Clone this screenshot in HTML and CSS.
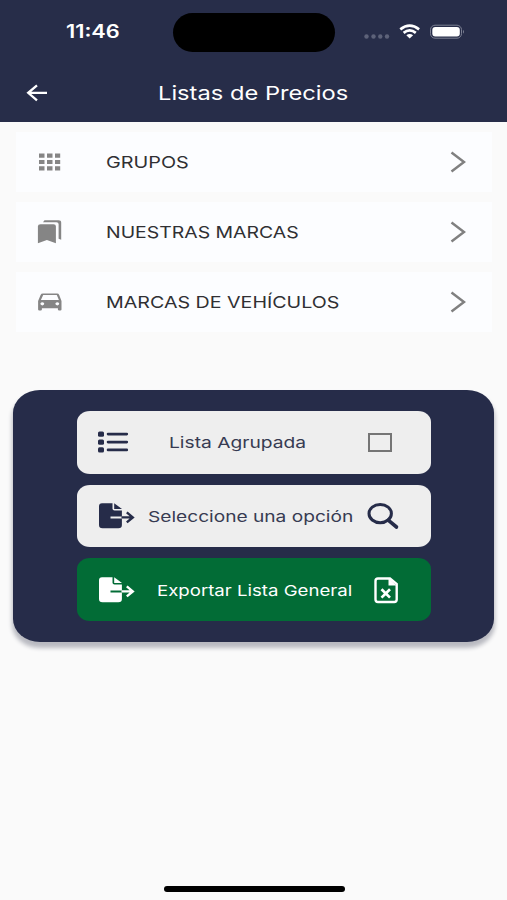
FILE: index.html
```html
<!DOCTYPE html>
<html lang="es">
<head>
<meta charset="utf-8">
<meta name="viewport" content="width=device-width, initial-scale=1">
<title>Listas de Precios</title>
<link rel="stylesheet" href="styles.css">
</head>
<body>
<header class="header">
  <div class="status">
    <span class="time"><span class="wide w-time">11:46</span></span>
    <div class="island"></div>
    <svg class="indicators" width="104" height="18" viewBox="0 0 104 18">
      <g fill="#5d6279"><circle cx="5.500" cy="13.500" r="2.200"/><circle cx="12.500" cy="13.500" r="2.200"/><circle cx="19.300" cy="13.500" r="2.200"/><circle cx="26" cy="13.500" r="2.200"/></g>
      <g fill="none" stroke="#fff" stroke-width="2.700"><path d="M39.300 6.400Q48.700-1 58.100 6.400"/><path d="M42.600 9.900Q48.700 5 54.800 9.900"/></g>
      <path d="M45.300 12.200Q48.700 9.700 52.100 12.200L48.700 15.500Z" fill="#fff"/>
      <rect x="69.500" y="2.200" width="31" height="13" rx="4.500" fill="none" stroke="#7c8093"/>
      <rect x="71.300" y="4" width="27.500" height="9.600" rx="3" fill="#fff"/>
      <path d="M102 6.800q2 2 0 4z" fill="#7c8093"/>
    </svg>
  </div>
  <div class="appbar">
    <svg class="back" width="22" height="18" viewBox="0 0 22 18" fill="none" stroke="#fff" stroke-width="2.300"><path d="M21 8.800H2.500M11 1.300L2.200 8.800L11 16.300"/></svg>
    <h1 class="title"><span class="wide w-title">Listas de Precios</span></h1>
  </div>
</header>
<main>
  <nav class="menu">
    <a class="row">
      <svg class="row-icon" width="26" height="26" viewBox="0 0 26 26" fill="#858585"><path d="M2 4.500h5.500v4.300H2zM10 4.500h5.500v4.300H10zM18 4.500h5.200v4.300H18zM2 10.900h5.500v4.200H2zM10 10.900h5.500v4.200H10zM18 10.900h5.200v4.200H18zM2 17.200h5.500v4.200H2zM10 17.200h5.500v4.200H10zM18 17.200h5.200v4.200H18z"/></svg>
      <span class="label"><span class="wide w-grupos">GRUPOS</span></span>
      <svg class="chevron" width="16" height="22" viewBox="0 0 16 22"><path d="M1.500 1.500L14 11L1.500 20.500"/></svg>
    </a>
    <a class="row">
      <svg class="row-icon" width="26" height="26" viewBox="0 0 26 26" fill="#858585"><path d="M3.500 5.300h13q2.400 0 2.400 2v17l-9-3.300-9 3.300v-17q0-2 2.600-2z"/><path d="M7.500 1.200h14q2.700 0 2.700 2.300v17.300l-2.600-1V5q0-1.800-2.200-1.800H6z"/></svg>
      <span class="label"><span class="wide w-marcas">NUESTRAS MARCAS</span></span>
      <svg class="chevron" width="16" height="22" viewBox="0 0 16 22"><path d="M1.500 1.500L14 11L1.500 20.500"/></svg>
    </a>
    <a class="row">
      <svg class="row-icon" width="26" height="26" viewBox="0 0 26 26" fill="#858585"><path fill-rule="evenodd" d="M6 4.500h14q1.700 0 2.200 1.400L24.500 12v8.500q0 1-1.200 1h-1.200q-1.200 0-1.200-1v-1.200H4.900v1.200q0 1-1.200 1H2.300q-1.200 0-1.200-1V12l2.500-6.100q.6-1.400 2.400-1.400zM6.200 6L3.900 11h18L19.800 6zM5.300 13.200a1.900 1.600 0 1 0 .01 0zM20.300 13.200a1.900 1.600 0 1 0 .01 0z"/></svg>
      <span class="label"><span class="wide w-vehiculos">MARCAS DE VEHÍCULOS</span></span>
      <svg class="chevron" width="16" height="22" viewBox="0 0 16 22"><path d="M1.500 1.500L14 11L1.500 20.500"/></svg>
    </a>
  </nav>
  <section class="panel">
    <button class="option">
      <svg class="lead" width="38" height="28" viewBox="0 0 38 28"><g fill="#262c49"><rect x="1" y="3.500" width="6" height="5.200" rx="1.500"/><rect x="1" y="11.500" width="6" height="5.200" rx="1.500"/><rect x="1" y="19.300" width="6" height="5.200" rx="1.500"/></g><path d="M11 6.100h18.800M11 14.100h18.800M11 21.900h18.800" stroke="#262c49" stroke-width="2.600" stroke-linecap="round"/></svg>
      <span class="caption"><span class="wide w-lista">Lista Agrupada</span></span>
      <svg class="trail" width="40" height="30" viewBox="0 0 40 30"><rect x="6" y="7" width="22" height="17" fill="none" stroke="#757575" stroke-width="2"/></svg>
    </button>
    <button class="option">
      <svg class="lead" width="38" height="28" viewBox="0 0 38 28"><g fill="#262c49"><path d="M5 1.200h10.500v5.600q0 1.800 2 1.800h7.400v5.800H13.500v2h11.400V23q0 3.200-3.500 3.200H5.500Q2 26.200 2 23V4.300Q2 1.200 5 1.200z"/><path d="M17.200 1.200L25 7.100h-7.800z"/></g><path d="M24.500 15.400h11M29.800 10.400l6 5-6 5" fill="none" stroke="#262c49" stroke-width="2.400"/></svg>
      <span class="caption"><span class="wide w-opcion">Seleccione una opción</span></span>
      <svg class="trail" width="40" height="30" viewBox="0 0 40 30" fill="none" stroke="#262c49"><ellipse cx="17.200" cy="12.600" rx="11.200" ry="9.100" stroke-width="3"/><path d="M25.200 19.200L33.500 26" stroke-width="3.600" stroke-linecap="round"/></svg>
    </button>
    <button class="option export">
      <svg class="lead" width="38" height="28" viewBox="0 0 38 28"><g fill="#fff"><path d="M5 1.200h10.500v5.600q0 1.800 2 1.800h7.400v5.800H13.500v2h11.400V23q0 3.200-3.500 3.200H5.500Q2 26.200 2 23V4.300Q2 1.200 5 1.200z"/><path d="M17.200 1.200L25 7.100h-7.800z"/></g><path d="M24.500 15.400h11M29.800 10.400l6 5-6 5" fill="none" stroke="#fff" stroke-width="2.400"/></svg>
      <span class="caption"><span class="wide w-exportar">Exportar Lista General</span></span>
      <svg class="trail" width="40" height="30" viewBox="0 0 40 30" fill="none" stroke="#fff"><path d="M15 3.500h12L33.700 9v15.500q0 2.500-2.500 2.500H15q-2.500 0-2.500-2.500V6q0-2.500 2.500-2.500z" stroke-width="2.400"/><path d="M25.500 3v7.500h8z" fill="#fff" stroke="none"/><path d="M18.500 14.200l8.500 8.400M27 14.200l-8.500 8.400" stroke-width="2.700"/></svg>
    </button>
  </section>
</main>
<div class="home-indicator"></div>
</body>
</html>
```
FILE: styles.css
```css
* { box-sizing: border-box; }
body {
  margin: 0;
  height: 900px;
  display: flex;
  flex-direction: column;
  background: #fafafa;
  font-family: Inter, "Liberation Sans", sans-serif;
  overflow: hidden;
}
.header { height: 122px; background: #272d49; color: #fff; }
.status { display: flex; align-items: center; height: 64px; }
.time { width: 107px; margin-left: 66px; font-size: 18px; font-weight: 600; line-height: 24px; }
.island { width: 162px; height: 39px; border-radius: 20px; background: #000; }
.indicators { margin-left: 26px; }
.appbar { display: flex; align-items: center; height: 58px; }
.back { margin-left: 26px; }
.title { margin: 0 0 0 110px; padding-top: 2px; font-size: 19px; font-weight: 400; line-height: 28px; }
.wide { display: inline-block; white-space: nowrap; transform-origin: 0 50%; }
.w-time { transform: scaleX(1.21); }
.w-title { transform: scaleX(1.246); }
.w-grupos { transform: scaleX(1.2); }
.w-marcas { transform: scaleX(1.177); }
.w-vehiculos { transform: scaleX(1.19); }
.w-lista { margin-left: 21px; transform: scaleX(1.28); }
.w-opcion { transform: scaleX(1.275); }
.w-exportar { margin-left: 9px; transform: scaleX(1.24); }
.menu { display: flex; flex-direction: column; gap: 10px; padding: 10px 15px 0 16px; }
.row { display: flex; align-items: center; height: 60px; padding-left: 21px; background: #fcfdff; }
.label { width: 344px; margin-left: 43px; color: #303033; font-size: 16.5px; line-height: 24px; }
.chevron { fill: none; stroke: #808080; stroke-width: 2.5; }
.panel {
  display: flex;
  flex-direction: column;
  gap: 11px;
  width: 481px;
  height: 252px;
  margin: 58px 0 0 13px;
  padding: 21px 63px 21px 64px;
  border-radius: 27px / 23px;
  background: #262c49;
  box-shadow: 0 5px 4px 1px #b9bac1;
}
.option {
  display: flex;
  align-items: center;
  width: 354px;
  height: 63px;
  padding: 0 0 0 20px;
  border: 0;
  border-radius: 13px / 11px;
  background: #eee;
  color: #373b52;
  font: 400 15px/22px Inter, "Liberation Sans", sans-serif;
  text-align: left;
}
.export { background: #026c36; color: #fff; }
.caption { width: 205px; margin-left: 13px; padding-top: 2px; }
.trail { margin-left: 10px; }
.home-indicator { width: 181px; height: 6px; margin: auto 0 8px 164px; border-radius: 3px; background: #000; }
```
